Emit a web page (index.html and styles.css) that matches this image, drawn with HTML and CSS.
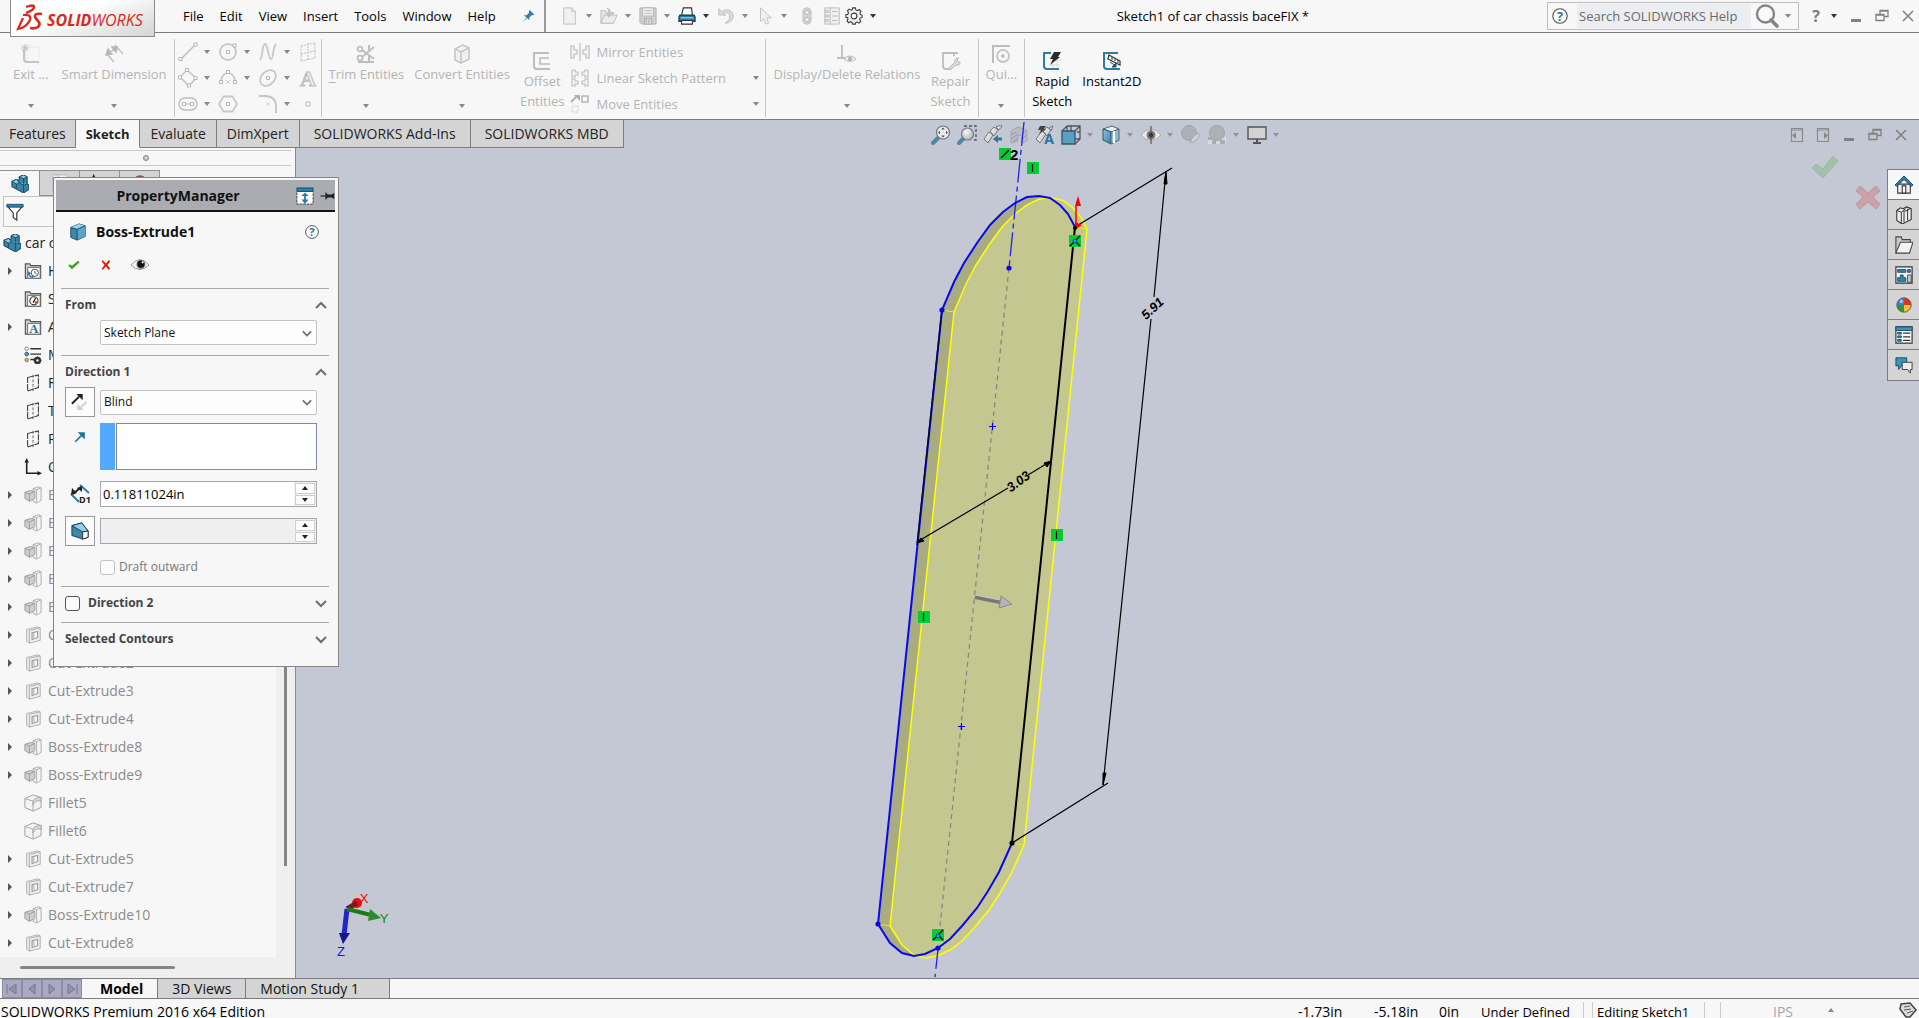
FILE: index.html
```html
<!DOCTYPE html>
<html lang="en">
<head>
<meta charset="utf-8">
<title>Sketch1 of car chassis baceFIX *</title>
<link rel="stylesheet" href="styles.css">
</head>
<body>
<svg class="paints" aria-hidden="true">
  <defs>
    <linearGradient id="blueg" x1="0" y1="0" x2="1" y2="1"><stop offset="0" stop-color="#8fc6de"/><stop offset="1" stop-color="#3b80a3"/></linearGradient>
    <linearGradient id="grayg" x1="0" y1="0" x2="1" y2="1"><stop offset="0" stop-color="#fff"/><stop offset="1" stop-color="#b5b5b5"/></linearGradient>
    <radialGradient id="lens" cx=".4" cy=".35" r=".7"><stop offset="0" stop-color="#f4f7f8"/><stop offset="1" stop-color="#a8b4bc"/></radialGradient>
  </defs>
</svg>
<svg class="sprite" aria-hidden="true">
  <symbol id="i-pin" viewBox="0 0 20 20"><path d="M12 1l7 7-2 1-2 0-3 3 0 4-3-3-7 6 6-7-4-3 4 0 3-3z" fill="#2f81ab"/></symbol>
  <symbol id="i-new" viewBox="0 0 20 20"><path d="M3 1h9l4 4v14H3z" fill="#f0f0f0" stroke="#bdbdbd"/><path d="M12 1v4h4" fill="none" stroke="#bdbdbd"/></symbol>
  <symbol id="i-open" viewBox="0 0 20 20"><path d="M1 4h5l1 2h8v12H1z" fill="#e2e2e2" stroke="#bdbdbd"/><path d="M1 18L5 9h14l-4 9z" fill="#ececec" stroke="#bdbdbd"/><path d="M7 1c4 0 5 2 5 6h3l-5 5-4-5h3c0-3 0-4-2-6z" fill="#c4c4c4"/></symbol>
  <symbol id="i-save" viewBox="0 0 20 20"><path d="M1 1h18v18H3l-2-2z" fill="#cfcfcf" stroke="#b0b0b0"/><path d="M4 1h12v9H4z" fill="#f2f2f2" stroke="#b0b0b0"/><path d="M6 4h8M6 7h8" stroke="#b0b0b0"/><path d="M6 13h8v6H6z" fill="#e0e0e0" stroke="#a8a8a8"/><path d="M8 14v4M11 14v4" stroke="#a0a0a0"/></symbol>
  <symbol id="i-print" viewBox="0 0 20 20"><path d="M4 9L6 1h9l1 8" fill="#fff" stroke="#333" stroke-width="1.3"/><path d="M2 9h16l1 2v5H1v-5z" fill="#2b7da4" stroke="#0c3c56" stroke-width="1.2"/><path d="M3 12h14" stroke="#8fd0ef" stroke-width="1.4"/><path d="M4 15h12v4H4z" fill="#fff" stroke="#333" stroke-width="1.2"/></symbol>
  <symbol id="i-undo" viewBox="0 0 20 20"><path d="M2 2v7h8L7 7c4-2 7 0 7 4 0 3-2 5-5 7 6 0 9-4 9-8 0-6-7-9-13-5z" fill="#dadada" stroke="#bdbdbd"/></symbol>
  <symbol id="i-select" viewBox="0 0 20 20"><path d="M5 1v15l4-3 2 6 3-1-2-6h5z" fill="#f1f1f1" stroke="#bdbdbd"/></symbol>
  <symbol id="i-light" viewBox="0 0 20 20"><rect x="5.500" y="1" width="9" height="18" rx="4.500" fill="#d5d5d5" stroke="#bbb"/><circle cx="10" cy="6" r="2.500" fill="#f4f4f4" stroke="#aaa"/><circle cx="10" cy="14" r="2.500" fill="#f4f4f4" stroke="#aaa"/></symbol>
  <symbol id="i-props" viewBox="0 0 20 20"><path d="M2 1h16v18H2zM8 1v18" fill="#f2f2f2" stroke="#b5b5b5"/><path d="M3 4h3v2H3zM3 9h3v2H3zM3 14h3v2H3zM10 5h6M10 10h6M10 15h6" fill="none" stroke="#b5b5b5"/></symbol>
  <symbol id="i-gear" viewBox="0 0 20 20"><path d="M8.500 1h3l.6 2.300 1.600.7 2.100-1.200 2 2-1.200 2.100.7 1.600L19 9v2.600l-2 .7-.7 1.600 1.200 2.100-2 2-2.100-1.200-1.600.7-.4 1.500h-3l-.6-2-1.600-.7-2.100 1.200-2-2 1.200-2.100L3 12 1 11.500v-3L3.200 8l.7-1.600L2.700 4.300l2-2 2.100 1.200L8.200 3z" fill="#eee" stroke="#3a3a3a" stroke-width="1.200"/><circle cx="10" cy="10" r="3.200" fill="#fff" stroke="#3a3a3a" stroke-width="1.200"/></symbol>
  <symbol id="i-help" viewBox="0 0 20 20"><circle cx="10" cy="10" r="8" fill="#fff" stroke="#4c4c4c" stroke-width="1.200"/><text x="10" y="15" class="glyph blue">?</text></symbol>
  <symbol id="i-find" viewBox="0 0 24 24"><circle cx="10.500" cy="10" r="8.500" fill="#fafafa" stroke="#858585" stroke-width="2.400"/><path d="M16 16l6 6" stroke="#858585" stroke-width="3.600" stroke-linecap="round"/></symbol>
  <symbol id="i-q" viewBox="0 0 12 16"><text x="6" y="14" class="glyph gray">?</text></symbol>
  <symbol id="i-min" viewBox="0 0 14 14"><path d="M2 10h10v3H2z" fill="#808080"/></symbol>
  <symbol id="i-restore" viewBox="0 0 14 14"><path d="M1 5.500h8v6H1zM5 5V1.500h8v6h-4M5 2h8M1 6h8" fill="none" stroke="#808080" stroke-width="1.300"/></symbol>
  <symbol id="i-close" viewBox="0 0 14 14"><path d="M2 2l10 10M12 2L2 12" stroke="#808080" stroke-width="1.500"/></symbol>
  <symbol id="i-paneL" viewBox="0 0 14 14"><path d="M1.500 .5h11v13h-11z" fill="none" stroke="#8a8a8a" stroke-width="1.200"/><path d="M1 2h12" stroke="#8a8a8a"/><path d="M2 7.500l4-3.500v7z" fill="#8a8a8a"/></symbol>
  <symbol id="i-paneR" viewBox="0 0 14 14"><path d="M1.500 .5h11v13h-11z" fill="none" stroke="#8a8a8a" stroke-width="1.200"/><path d="M1 2h12" stroke="#8a8a8a"/><path d="M12 7.500L8 4v7z" fill="#8a8a8a"/></symbol>

  <symbol id="r-exit" viewBox="0 0 20 20"><path d="M5 5v11q0 2 2 2h12M8 3h10v11" fill="none" stroke="#e6e6e6"/><path d="M3 6v9q0 3 3 3h12" fill="none" stroke="#c4c4c4" stroke-width="2"/><path d="M4 0v7M0 4h8M1 1l6 6M7 1L1 7" stroke="#bdbdbd"/></symbol>
  <symbol id="r-dim" viewBox="0 0 20 20"><path d="M3 10l7 8M11 1l8 9" stroke="#c4c4c4" stroke-width="1.600"/><path d="M4 10l9-7M2 11l2-6 4 5zM13 3l-5 0 4 5z" fill="#b8b8b8" stroke="#b8b8b8" stroke-width="1.500"/></symbol>
  <symbol id="r-line" viewBox="0 0 20 20"><path d="M3 17L17 3" stroke="#bfbfbf" stroke-width="1.600"/><path d="M1 15.500h3v3H1zM16 1h3v3h-3z" fill="#fff" stroke="#b5b5b5"/></symbol>
  <symbol id="r-circle" viewBox="0 0 20 20"><circle cx="10" cy="10" r="8" fill="none" stroke="#c9c9c9" stroke-width="1.800"/><path d="M8.500 8.500h3v3h-3zM15 2h3v3h-3z" fill="#fff" stroke="#b5b5b5"/></symbol>
  <symbol id="r-spline" viewBox="0 0 20 20"><path d="M2 18C5 15 4 2 7 2s3 15 6 15S14 6 18 2" fill="none" stroke="#c9c9c9" stroke-width="1.800"/></symbol>
  <symbol id="r-plane" viewBox="0 0 20 20"><path d="M3 4l14-3v15L3 19z M10 1v18M3 12l14-3" fill="none" stroke="#bdbdbd" stroke-dasharray="2 1"/></symbol>
  <symbol id="r-rect" viewBox="0 0 20 20"><path d="M2 9l7-7 9 8-7 8z" fill="none" stroke="#c4c4c4" stroke-width="1.600"/><path d="M.5 8h3v3h-3zM7.500.5h3v3h-3zM16 8.500h3v3h-3zM9.500 16h3v3h-3z" fill="#fff" stroke="#b5b5b5"/></symbol>
  <symbol id="r-arc" viewBox="0 0 20 20"><path d="M3 14C3 2 17 2 17 14" fill="none" stroke="#c4c4c4" stroke-width="1.600"/><path d="M1.500 12.500h3v3h-3zM15.500 12.500h3v3h-3zM8.500 2.500h3v3h-3z" fill="#fff" stroke="#b5b5b5"/><path d="M8 12l4 4M12 12l-4 4" stroke="#ccc"/></symbol>
  <symbol id="r-ellipse" viewBox="0 0 20 20"><ellipse cx="10" cy="10" rx="9" ry="6.500" transform="rotate(-45 10 10)" fill="none" stroke="#c4c4c4" stroke-width="1.600"/><path d="M8.500 8.500h3v3h-3z" fill="#fff" stroke="#b5b5b5"/></symbol>
  <symbol id="r-text" viewBox="0 0 20 20"><text x="10" y="18" class="glyph outline">A</text></symbol>
  <symbol id="r-slot" viewBox="0 0 20 20"><rect x="1" y="4" width="18" height="12" rx="6" fill="none" stroke="#c9c9c9" stroke-width="1.800"/><path d="M4.500 8.500h3v3h-3zM12.500 8.500h3v3h-3zM8 10h4" fill="#fff" stroke="#b5b5b5"/></symbol>
  <symbol id="r-poly" viewBox="0 0 20 20"><path d="M5.500 2.500h9L19 10l-4.500 7.500h-9L1 10z" fill="none" stroke="#c9c9c9" stroke-width="1.800"/><path d="M8.500 8.500h3v3h-3z" fill="#fff" stroke="#b5b5b5"/></symbol>
  <symbol id="r-fillet" viewBox="0 0 20 20"><path d="M1 2h6q11 0 11 11v6" fill="none" stroke="#c4c4c4" stroke-width="1.800"/><path d="M8 8l4 4M12 8l-4 4" stroke="#d5d5d5"/></symbol>
  <symbol id="r-point" viewBox="0 0 20 20"><path d="M8 8h4v4H8z" fill="#fff" stroke="#b5b5b5"/></symbol>
  <symbol id="r-trim" viewBox="0 0 20 20"><circle cx="4" cy="5" r="2.500" fill="none" stroke="#b9b9b9" stroke-width="1.700"/><circle cx="4" cy="14" r="2.500" fill="none" stroke="#b9b9b9" stroke-width="1.700"/><path d="M6 6l12 9M6 13L18 3M13 1v5M13 12v7M2 18h16" stroke="#bdbdbd" stroke-width="2"/></symbol>
  <symbol id="r-convert" viewBox="0 0 20 20"><path d="M3 5l8-4 6 3v11l-8 4-6-3z" fill="#f0f0f0" stroke="#bdbdbd" stroke-width="1.300"/><path d="M3 5l6 3 8-4M9 8v11" fill="none" stroke="#bdbdbd" stroke-width="1.300"/></symbol>
  <symbol id="r-offset" viewBox="0 0 20 20"><path d="M17 2H2v13q0 3 3 3h13" fill="none" stroke="#bdbdbd" stroke-width="2"/><path d="M17 7H8v6h10" fill="none" stroke="#bdbdbd" stroke-width="1.600"/></symbol>
  <symbol id="r-mirror" viewBox="0 0 20 20"><path d="M10 1v18M1 4h3v4h3v4H4v4H1zM19 4h-3v4h-3v4h3v4h3z" fill="none" stroke="#bdbdbd" stroke-width="1.200"/></symbol>
  <symbol id="r-linear" viewBox="0 0 20 20"><path d="M2 2h3v2h3v3H5v2H2zM18 2h-3v2h-3v3h3v2h3zM2 11h3v2h3v3H5v2H2zM18 11h-3v2h-3v3h3v2h3z" fill="none" stroke="#bdbdbd" stroke-width="1.200"/></symbol>
  <symbol id="r-move" viewBox="0 0 20 20"><path d="M1 8l6-6" stroke="#b0b0b0" stroke-width="2"/><path d="M4 1h6v6z" fill="#b0b0b0"/><path d="M12 2h6v6h-6z" fill="none" stroke="#b8b8b8" stroke-width="1.600"/><path d="M2 12h6v6H2z" fill="none" stroke="#d0d0d0" stroke-dasharray="2 1"/></symbol>
  <symbol id="r-disp" viewBox="0 0 20 20"><path d="M5 1v13M0 14h9" fill="none" stroke="#bdbdbd" stroke-width="1.800"/><path d="M7 15q6-6 12 0-6 5-12 0z" fill="#f2f2f2" stroke="#bdbdbd"/><circle cx="13" cy="15" r="2.200" fill="#b5b5b5"/></symbol>
  <symbol id="r-repair" viewBox="0 0 20 20"><path d="M17 2H2v13q0 3 3 3h3M13 2v3" fill="none" stroke="#bdbdbd" stroke-width="1.800"/><path d="M8 17l6-6q-1-4 4-4l-2 2 1 2h2q0 4-4 3l-6 5z" fill="#ddd" stroke="#b5b5b5"/></symbol>
  <symbol id="r-quick" viewBox="0 0 20 20"><path d="M2 19V2h17" fill="none" stroke="#bdbdbd" stroke-width="2"/><circle cx="12" cy="12" r="6" fill="none" stroke="#c4c4c4" stroke-width="1.800"/><circle cx="12" cy="12" r="1.800" fill="#b5b5b5"/></symbol>
  <symbol id="r-rapid" viewBox="0 0 20 20"><path d="M11 5v14M15 5v12M8 9h12M8 14h10" stroke="#dedede"/><path d="M9 2H2v13q0 3 3 3h12" fill="none" stroke="#2b7da4" stroke-width="2"/><path d="M12 1h7l-3 5h2L8 14l3-6H8z" fill="#2c2c2c"/></symbol>
  <symbol id="r-inst" viewBox="0 0 20 20"><path d="M16 2H2v13q0 3 3 3h13" fill="none" stroke="#2b7da4" stroke-width="2"/><path d="M7 4l11 6v4L6 8z" fill="#fff" stroke="#333" stroke-width="1.200"/><path d="M10 6v3M13 7v3M16 9v3" stroke="#333"/><path d="M8 11l6 4M14 12v4h-4z" fill="#1a5879" stroke="#1a5879"/></symbol>

  <symbol id="h-fit" viewBox="0 0 20 20"><path d="M2 18l6-6" stroke="#4c87a3" stroke-width="4" stroke-linecap="round"/><circle cx="12" cy="7.500" r="6.500" fill="#e9ecee" stroke="#6e747a" stroke-width="1.200"/><path d="M12 2.500l1.800 2h-3.600zM12 12.500l1.800-2h-3.600zM7 7.500l2-1.800v3.600zM17 7.500l-2-1.800v3.600z" fill="#4a4f54"/></symbol>
  <symbol id="h-area" viewBox="0 0 20 20"><path d="M7 1h12v14h-4" fill="none" stroke="#555" stroke-width="1.300" stroke-dasharray="3 2"/><path d="M2 18l4-4" stroke="#4c87a3" stroke-width="4" stroke-linecap="round"/><circle cx="10.500" cy="9" r="6" fill="url(#lens)" stroke="#737b82" stroke-width="1.200"/></symbol>
  <symbol id="h-prev" viewBox="0 0 20 20"><path d="M1 14l5-7 4 3-5 8zM7 6l4-4 4 3-4 6zM13 2l5-2 1 1-3 4z" fill="url(#grayg)" stroke="#777"/><path d="M10 14l5-4v2.500h4v3h-4V18z" fill="#33789a"/></symbol>
  <symbol id="h-sect" viewBox="0 0 20 20"><path d="M2 6l7-4 9 3v11l-5 2v-7l-4-1v6l-7 2z" fill="#b9bcc4" stroke="#a3a7ae"/><path d="M2 10l5-3M2 14l7-5M4 17l5-4M13 9l4-3M13 14l5-4" stroke="#9599a1"/></symbol>
  <symbol id="h-orient" viewBox="0 0 20 20"><path d="M1 14l6-8 4 3-6 9zM8 7l4-5 4 3-4 6zM14 3l4-2-2 5z" fill="url(#grayg)" stroke="#777"/><path d="M5 1h6l-2 3h2L4 9l2-4H3z" fill="#444"/><text x="14" y="19" class="glyph blue">A</text></symbol>
  <symbol id="h-cube" viewBox="0 0 20 20"><path d="M6 1h13v13l-5 5M6 1L1 6M19 1l-5 5M6 1v5M14 14h5M10 1v5M16 7h3" fill="none" stroke="#50555a" stroke-width="1.300"/><path d="M1 6h13v13H1z" fill="#5b9fc0" stroke="#28596f" stroke-width="1.300"/></symbol>
  <symbol id="h-style" viewBox="0 0 20 20"><path d="M2 4l9-3 7 3-7 3z" fill="#e6f0f4" stroke="#55656e"/><path d="M2 4l8 3v12l-8-4z" fill="url(#blueg)" stroke="#27576d"/><path d="M10 7l8-3v11l-8 4z" fill="#8cbcd2" stroke="#55656e"/><path d="M13 6v12" stroke="#fff" stroke-width="2"/></symbol>
  <symbol id="h-eye" viewBox="0 0 20 20"><path d="M0 10q10-12 20 0-10 11-20 0z" fill="#e9e9e9" stroke="#aaa"/><circle cx="10" cy="10" r="4.500" fill="#7b7b7b"/><circle cx="10" cy="10" r="2.200" fill="#333"/><path d="M10 1v18" stroke="#444"/></symbol>
  <symbol id="h-appear" viewBox="0 0 20 20"><circle cx="8" cy="8" r="7.500" fill="#acb0b7" stroke="#a0a4ab"/><path d="M9 18l2-5 6-5 2 3-6 6z" fill="#d0d2d6" stroke="#a5a8ae"/></symbol>
  <symbol id="h-scene" viewBox="0 0 20 20"><path d="M1 12h18v7H1z" fill="#d8dade"/><path d="M1 12h4v3H1zM9 12h4v3H9zM5 15h4v4H5zM13 15h5v4h-5z" fill="#a8acb3"/><circle cx="10" cy="8" r="7.500" fill="#acb0b7" stroke="#a0a4ab"/></symbol>
  <symbol id="h-view" viewBox="0 0 20 20"><path d="M1 2h18v12H1z" fill="#d2d2d2" stroke="#555" stroke-width="1.400"/><path d="M10 14v4M6 18h8" stroke="#555" stroke-width="2"/></symbol>

  <symbol id="t-part" viewBox="0 0 20 20"><path d="M1 7l5-2 3 1V2l5-2 4 2v8l2 1v5l-6 4L1 13z" fill="#3a82a6" stroke="#0f3c54"/><path d="M9 2l5-2 4 2-4 2zM1 7l5-2 3 3-3 2zM9 9l5 2 5-1" fill="#8fcbe4" stroke="#0f3c54" stroke-width=".8"/><path d="M14 4v7v8M6 10v5" fill="none" stroke="#0f3c54" stroke-width=".8"/></symbol>
  <symbol id="t-fold" viewBox="0 0 20 20"><path d="M1.500 18V2h5l1 2h11v14z" fill="#d0d0d0" stroke="#555" stroke-width="1.300"/><path d="M4 6h14v12H4z" fill="#f7f7f7" stroke="#666"/></symbol>
  <symbol id="t-hist" viewBox="0 0 20 20"><use href="#t-fold"/><circle cx="12" cy="12" r="4" fill="#fff" stroke="#444"/><path d="M12 10v2l2 1" fill="none" stroke="#444"/><path d="M5 13q2 5 6 3" fill="none" stroke="#2b7da4" stroke-width="1.800"/><path d="M4 14l1-4 3 3z" fill="#2b7da4"/></symbol>
  <symbol id="t-sens" viewBox="0 0 20 20"><use href="#t-fold"/><circle cx="11" cy="12" r="4.500" fill="#fff" stroke="#333" stroke-width="1.200"/><path d="M11 12l4 1-2 3z" fill="#e0421c"/><path d="M10 14l3-5" stroke="#333" stroke-width="1.400"/></symbol>
  <symbol id="t-anno" viewBox="0 0 20 20"><use href="#t-fold"/><text x="11" y="17" class="glyph serif">A</text></symbol>
  <symbol id="t-mat" viewBox="0 0 20 20"><path d="M7 3h12M7 9h12M7 15h6" stroke="#333" stroke-width="1.600"/><circle cx="3" cy="3" r="2" fill="#fff" stroke="#777"/><circle cx="3" cy="9" r="2" fill="#3fb0e0" stroke="#246"/><circle cx="3" cy="15.500" r="2" fill="#f2b01c" stroke="#875"/><circle cx="15" cy="16" r="2.800" fill="none" stroke="#333" stroke-width="2.400"/><path d="M15 11.500v9M10.500 16h9M12 13l6 6M18 13l-6 6" stroke="#333" stroke-width="1.200"/><circle cx="15" cy="16" r="1.300" fill="#f7f7f7"/></symbol>
  <symbol id="t-plane" viewBox="0 0 20 20"><path d="M4 4l12-3v14L4 19z" fill="none" stroke="#3c3c3c" stroke-width="1.200" stroke-dasharray="7 1"/><path d="M10 1v19" stroke="#555" stroke-dasharray="3 2"/></symbol>
  <symbol id="t-origin" viewBox="0 0 20 20"><path d="M3 3v14h14" fill="none" stroke="#222" stroke-width="1.800"/><path d="M3 0l2.500 5h-5zM20 17l-5-2.500v5z" fill="#222"/></symbol>
  <symbol id="t-boss" viewBox="0 0 20 20"><path d="M10 3l5-2 4 1v14l-5 3-4-2z" fill="#f4f4f4" stroke="#a9a9a9"/><path d="M14 4v14M10 3l4 1 5-2" fill="none" stroke="#a9a9a9"/><path d="M1 7l6-2 5 1v8l-6 3-5-3z" fill="#cfcfcf" stroke="#999"/><path d="M1 7l5 2 6-3M6 9v8" fill="none" stroke="#999"/></symbol>
  <symbol id="t-cut" viewBox="0 0 20 20"><path d="M3 4l12-3 3 1v14L6 19l-3-2z" fill="#eee" stroke="#aaa"/><path d="M6 5l12-3M6 5v14" stroke="#aaa"/><path d="M9 7.500l6-1.500v7l-6 2z" fill="#fff" stroke="#999" stroke-width="1.300"/><path d="M11 7v6.500" stroke="#999"/></symbol>
  <symbol id="t-fillet" viewBox="0 0 20 20"><path d="M1 5l9-4 9 3v11l-9 4-9-4z" fill="#f3f3f3" stroke="#999"/><path d="M1 5l9 3v11" fill="none" stroke="#a5a5a5"/><path d="M10 8q1-4 9-4v4q-6-2-9 4z" fill="#d8d8d8" stroke="#a5a5a5"/></symbol>
  <symbol id="t-filter" viewBox="0 0 20 20"><path d="M2 4h16l-6 7v8l-4-3v-5z" fill="#fff" stroke="#333" stroke-width="1.300"/><path d="M1 1.500h18v3H1z" fill="#2f86ae" stroke="#124a66"/></symbol>

  <symbol id="d-cube" viewBox="0 0 20 20"><path d="M2 5l9-4 7 2v12l-9 4-7-3z" fill="#3d87ab" stroke="#174a63"/><path d="M2 5l9-4 7 2-9 4z" fill="#9ed3e8"/><path d="M9 7l9-4v12l-9 4z" fill="#5ba4c6"/><path d="M2 5l7 2 9-4M9 7v12" fill="none" stroke="#174a63"/></symbol>
  <symbol id="d-dock" viewBox="0 0 20 20"><path d="M1 5h18v14H1z" fill="#fff" stroke="#333" stroke-dasharray="3 1"/><path d="M1 1h18v4H1z" fill="#2b7da4" stroke="#14506e"/><path d="M10 6l4 4h-3v4h3l-4 5-4-5h3v-4H6z" fill="#2b7da4"/></symbol>
  <symbol id="d-tack" viewBox="0 0 20 20"><path d="M2 10h7" stroke="#222" stroke-width="1.500"/><path d="M8 5v10l3-3h5l3 2V6l-3 2h-5z" fill="#222"/></symbol>
  <symbol id="d-ok" viewBox="0 0 20 20"><path d="M4 9l-2 2 5 5L18 6l-2-2-9 7z" fill="#3fa317"/></symbol>
  <symbol id="d-no" viewBox="0 0 20 20"><path d="M5 3l5 5 4-5 2 2-4 5 4 5-2 2-4-5-5 5-1-2 4-5-4-5z" fill="#e02200"/></symbol>
  <symbol id="d-eye" viewBox="0 0 20 20"><path d="M0 10q10-12 20 0-10 10-20 0z" fill="#f6f6f6" stroke="#8f8f8f"/><circle cx="11" cy="9.500" r="5" fill="#8a8a8a"/><circle cx="11" cy="9" r="4" fill="#111"/><circle cx="13" cy="7" r="1.200" fill="#fff"/></symbol>
  <symbol id="d-rev" viewBox="0 0 20 20"><path d="M1 12l8-8" stroke="#222" stroke-width="2.200"/><path d="M6 1h7v7z" fill="#222"/><path d="M17 10l-6 6" stroke="#cfcfcf" stroke-width="2.200"/><path d="M7 12v7h7z" fill="#cfcfcf"/></symbol>
  <symbol id="d-dir" viewBox="0 0 20 20"><path d="M4 16l8-8" stroke="#1f7199" stroke-width="2"/><path d="M7 4h9v9z" fill="#1f7199"/></symbol>
  <symbol id="d-d1" viewBox="0 0 20 20"><path d="M1 10l8 8M10 1l9 8" stroke="#2b7da4" stroke-width="2"/><path d="M3 10l7-6" stroke="#222" stroke-width="2"/><path d="M1 11l1-7 5 5zM12 2v6L7 4z" fill="#222"/><text x="15" y="19" class="glyph tiny">D1</text></symbol>
  <symbol id="d-draft" viewBox="0 0 20 20"><path d="M1 4l11-3 7 9v7l-6 2L1 15z" fill="#3d87ab" stroke="#12394c"/><path d="M1 4l11-3 7 9-6 1z" fill="#8fd0ea" stroke="#12394c"/><path d="M13 11l6-1v7l-6 2z" fill="#fff" stroke="#222"/></symbol>
  <symbol id="d-up" viewBox="0 0 12 12"><path d="M1 9l5-5 5 5" fill="none" stroke="#6e6e6e" stroke-width="2"/></symbol>
  <symbol id="d-down" viewBox="0 0 12 12"><path d="M1 4l5 5 5-5" fill="none" stroke="#6e6e6e" stroke-width="2"/></symbol>

  <symbol id="p-home" viewBox="0 0 20 20"><path d="M3 9h14v10H3z" fill="#f4f4f4" stroke="#333" stroke-width="1.200"/><path d="M8 11h4v8H8z" fill="#fff" stroke="#333" stroke-width="1.200"/><path d="M0 10L10 0l10 10-2 1.500L10 4 2 11.500z" fill="#2f81a8" stroke="#0e3d55"/></symbol>
  <symbol id="p-lib" viewBox="0 0 20 20"><path d="M2 5l4-3 3 1 4-2 5 2v12l-10 5-6-4z" fill="#efefef" stroke="#333" stroke-width="1.200"/><path d="M2 5l5 2 5-4M7 7v12M10 4v14M14 3v13M11 6l6-3" fill="none" stroke="#333" stroke-width="1.100"/></symbol>
  <symbol id="p-folder" viewBox="0 0 20 20"><path d="M1 19V1h6l1 3h9v3" fill="#c9c9c9" stroke="#444" stroke-width="1.200"/><path d="M1 19L6 7h14l-4 12z" fill="#f3f3f3" stroke="#444" stroke-width="1.200"/></symbol>
  <symbol id="p-pal" viewBox="0 0 20 20"><path d="M1 1h18v18H1z" fill="#f2f2f2" stroke="#333" stroke-width="1.300"/><path d="M3 4h9v3H3zM14 4h3v3h-3zM6 10h3v3h3v4H3v-4h3z" fill="#2f86ae" stroke="#164a63"/><path d="M14 10h4v8h-4z" fill="#ccc" stroke="#444"/></symbol>
  <symbol id="p-ball" viewBox="0 0 20 20"><path d="M10 10V2a8 8 0 0 0-8 8z" fill="#3a7de0"/><path d="M10 10V2a8 8 0 0 1 8 8z" fill="#e03024"/><path d="M10 10h8a8 8 0 0 1-8 8z" fill="#f0c030"/><path d="M10 10v8a8 8 0 0 1-8-8z" fill="#2a9a2a"/><circle cx="10" cy="10" r="8" fill="none" stroke="#555"/><circle cx="7" cy="6" r="2" fill="#fff" opacity=".5"/></symbol>
  <symbol id="p-list" viewBox="0 0 20 20"><path d="M1 1h18v18H1z" fill="#fff" stroke="#333" stroke-width="1.300"/><path d="M1 1h18v4H1z" fill="#3b93bb" stroke="#164a63"/><path d="M3 7h4v2H3zM3 11h4v2H3zM3 15h4v2H3z" fill="#3b93bb" stroke="#164a63"/><path d="M9 8h8M9 12h8M9 16h8" stroke="#333" stroke-width="1.300"/></symbol>
  <symbol id="p-chat" viewBox="0 0 20 20"><path d="M1 2h12v9H7l-3 4v-4H1z" fill="#3b93bb" stroke="#164a63"/><path d="M8 7h11v8h-2v4l-3-4H8z" fill="#ececec" stroke="#333"/></symbol>
</svg>

<header class="titlebar">
  <div class="logo">
    <svg width="28" height="32" viewBox="0 0 28 32"><path d="M11 5q8-3 8 0t-8 6" fill="none" stroke="#da291c" stroke-width="2.400"/><path d="M8 13q9-1 7 5-3 7-12 9l5-11" fill="none" stroke="#da291c" stroke-width="2.200"/><path d="M27 12q-7-1-7 2 0 2 3 5t0 6q-3 2-8 1" fill="none" stroke="#da291c" stroke-width="2.600"/></svg>
    <span><b>SOLID</b>WORKS</span>
  </div>
  <nav class="menu">
    <button>File</button><button>Edit</button><button>View</button><button>Insert</button><button>Tools</button><button>Window</button><button>Help</button>
  </nav>
  <button class="pin" aria-label="Pin menu"><svg class="i14"><use href="#i-pin"/></svg></button>
  <div class="quick">
    <button class="split" aria-label="New"><svg class="i18"><use href="#i-new"/></svg><i class="caret"></i></button>
    <button class="split" aria-label="Open"><svg class="i18"><use href="#i-open"/></svg><i class="caret"></i></button>
    <button class="split" aria-label="Save"><svg class="i18"><use href="#i-save"/></svg><i class="caret"></i></button>
    <button class="split" aria-label="Print"><svg class="i18"><use href="#i-print"/></svg><i class="caret dark"></i></button>
    <button class="split" aria-label="Undo"><svg class="i18"><use href="#i-undo"/></svg><i class="caret"></i></button>
    <button class="split" aria-label="Select"><svg class="i18"><use href="#i-select"/></svg><i class="caret"></i></button>
    <button class="single" aria-label="Rebuild"><svg class="i18"><use href="#i-light"/></svg></button>
    <button class="single" aria-label="File properties"><svg class="i18"><use href="#i-props"/></svg></button>
    <button class="split" aria-label="Options"><svg class="i18"><use href="#i-gear"/></svg><i class="caret dark"></i></button>
  </div>
  <div class="doc">Sketch1 of car chassis baceFIX *</div>
  <div class="search">
    <svg class="i18"><use href="#i-help"/></svg>
    <input type="text" placeholder="Search SOLIDWORKS Help" aria-label="Search SOLIDWORKS Help">
    <button aria-label="Search"><svg class="i24"><use href="#i-find"/></svg><i class="caret"></i></button>
  </div>
  <div class="winctl">
    <button class="helpq" aria-label="Help"><svg width="12" height="16"><use href="#i-q"/></svg><i class="caret dark"></i></button>
    <button aria-label="Minimize"><svg class="i14"><use href="#i-min"/></svg></button>
    <button aria-label="Restore"><svg class="i14"><use href="#i-restore"/></svg></button>
    <button aria-label="Close"><svg class="i14"><use href="#i-close"/></svg></button>
  </div>
</header>

<section class="ribbon">
  <button class="cmd exit" disabled><svg class="i20"><use href="#r-exit"/></svg><span>Exit ...</span><i class="caret"></i></button>
  <button class="cmd" disabled><svg class="i20"><use href="#r-dim"/></svg><span>Smart Dimension</span><i class="caret"></i></button>
  <div class="sep"></div>
  <div class="tools">
    <button disabled aria-label="Line"><svg class="i20"><use href="#r-line"/></svg><i class="caret"></i></button>
    <button disabled aria-label="Circle"><svg class="i20"><use href="#r-circle"/></svg><i class="caret"></i></button>
    <button disabled aria-label="Spline"><svg class="i20"><use href="#r-spline"/></svg><i class="caret"></i></button>
    <button disabled aria-label="Plane"><svg class="i20"><use href="#r-plane"/></svg></button>
    <button disabled aria-label="Rectangle"><svg class="i20"><use href="#r-rect"/></svg><i class="caret"></i></button>
    <button disabled aria-label="Arc"><svg class="i20"><use href="#r-arc"/></svg><i class="caret"></i></button>
    <button disabled aria-label="Ellipse"><svg class="i20"><use href="#r-ellipse"/></svg><i class="caret"></i></button>
    <button disabled aria-label="Text"><svg class="i20"><use href="#r-text"/></svg></button>
    <button disabled aria-label="Slot"><svg class="i20"><use href="#r-slot"/></svg><i class="caret"></i></button>
    <button disabled aria-label="Polygon"><svg class="i20"><use href="#r-poly"/></svg></button>
    <button disabled aria-label="Sketch fillet"><svg class="i20"><use href="#r-fillet"/></svg><i class="caret"></i></button>
    <button disabled aria-label="Point"><svg class="i20"><use href="#r-point"/></svg></button>
  </div>
  <div class="sep"></div>
  <button class="cmd" disabled><svg class="i20"><use href="#r-trim"/></svg><span><u>T</u>rim Entities</span><i class="caret"></i></button>
  <button class="cmd" disabled><svg class="i20"><use href="#r-convert"/></svg><span>Convert Entities</span><i class="caret"></i></button>
  <button class="cmd low" disabled><svg class="i20"><use href="#r-offset"/></svg><span>Offset<br>Entities</span></button>
  <div class="list">
    <button disabled><svg class="i20"><use href="#r-mirror"/></svg><span>Mirror Entities</span></button>
    <button disabled><svg class="i20"><use href="#r-linear"/></svg><span>Linear Sketch Pattern</span><i class="caret"></i></button>
    <button disabled><svg class="i20"><use href="#r-move"/></svg><span>Move Entities</span><i class="caret"></i></button>
  </div>
  <div class="sep"></div>
  <button class="cmd" disabled><svg class="i20"><use href="#r-disp"/></svg><span>Display/Delete Relations</span><i class="caret"></i></button>
  <button class="cmd low" disabled><svg class="i20"><use href="#r-repair"/></svg><span>Repair<br>Sketch</span></button>
  <div class="sep"></div>
  <button class="cmd" disabled><svg class="i20"><use href="#r-quick"/></svg><span>Qui...</span><i class="caret"></i></button>
  <div class="sep"></div>
  <button class="cmd low"><svg class="i20"><use href="#r-rapid"/></svg><span>Rapid<br>Sketch</span></button>
  <button class="cmd low"><svg class="i20"><use href="#r-inst"/></svg><span>Instant2D</span></button>
</section>

<main class="work">
  <div class="toprow">
    <nav class="tabs">
      <button>Features</button><button class="on">Sketch</button><button>Evaluate</button><button>DimXpert</button><button>SOLIDWORKS Add-Ins</button><button>SOLIDWORKS MBD</button>
    </nav>
    <div class="hud">
      <button aria-label="Zoom to fit"><svg class="i20"><use href="#h-fit"/></svg></button>
      <button aria-label="Zoom to area"><svg class="i20"><use href="#h-area"/></svg></button>
      <button aria-label="Previous view"><svg class="i20"><use href="#h-prev"/></svg></button>
      <button aria-label="Section view"><svg class="i20"><use href="#h-sect"/></svg></button>
      <button aria-label="Dynamic annotation views"><svg class="i20"><use href="#h-orient"/></svg></button>
      <button class="wide" aria-label="View orientation"><svg class="i20"><use href="#h-cube"/></svg><i class="caret"></i></button>
      <button class="wide" aria-label="Display style"><svg class="i20"><use href="#h-style"/></svg><i class="caret"></i></button>
      <button class="wide" aria-label="Hide or show items"><svg class="i20"><use href="#h-eye"/></svg><i class="caret"></i></button>
      <button aria-label="Edit appearance"><svg class="i20"><use href="#h-appear"/></svg></button>
      <button class="wide" aria-label="Apply scene"><svg class="i20"><use href="#h-scene"/></svg><i class="caret"></i></button>
      <button class="wide" aria-label="View settings"><svg class="i20"><use href="#h-view"/></svg><i class="caret"></i></button>
    </div>
    <div class="docctl">
      <button aria-label="Expand left"><svg class="i14"><use href="#i-paneL"/></svg></button>
      <button aria-label="Expand right"><svg class="i14"><use href="#i-paneR"/></svg></button>
      <button aria-label="Minimize document"><svg class="i14"><use href="#i-min"/></svg></button>
      <button aria-label="Restore document"><svg class="i14"><use href="#i-restore"/></svg></button>
      <button aria-label="Close document"><svg class="i14"><use href="#i-close"/></svg></button>
    </div>
  </div>

  <div class="body">
    <aside class="side">
      <div class="grip"><i></i></div>
      <div class="ptabs">
        <button class="on" aria-label="Feature tree"><svg class="i18"><use href="#t-part"/></svg></button>
        <button aria-label="Properties"><svg class="i18"><use href="#i-props"/></svg></button>
        <button aria-label="Configurations"><svg class="i18"><use href="#t-origin"/></svg></button>
        <button aria-label="Display manager"><svg class="i18"><use href="#p-ball"/></svg></button>
      </div>
      <div class="treewrap">
        <div class="treebox">
          <div class="filter"><svg class="i18"><use href="#t-filter"/></svg></div>
          <ul class="tree">
            <li class="root"><svg class="i18"><use href="#t-part"/></svg>car chassis baceFIX</li>
            <li class="x"><svg class="i18"><use href="#t-hist"/></svg>History</li>
            <li><svg class="i18"><use href="#t-sens"/></svg>Sensors</li>
            <li class="x"><svg class="i18"><use href="#t-anno"/></svg>Annotations</li>
            <li><svg class="i18"><use href="#t-mat"/></svg>Material</li>
            <li><svg class="i18"><use href="#t-plane"/></svg>Front Plane</li>
            <li><svg class="i18"><use href="#t-plane"/></svg>Top Plane</li>
            <li><svg class="i18"><use href="#t-plane"/></svg>Right Plane</li>
            <li><svg class="i18"><use href="#t-origin"/></svg>Origin</li>
            <li class="x off"><svg class="i18"><use href="#t-boss"/></svg>Boss-Extrude1</li>
            <li class="x off"><svg class="i18"><use href="#t-boss"/></svg>Boss-Extrude2</li>
            <li class="x off"><svg class="i18"><use href="#t-boss"/></svg>Boss-Extrude3</li>
            <li class="x off"><svg class="i18"><use href="#t-boss"/></svg>Boss-Extrude4</li>
            <li class="x off"><svg class="i18"><use href="#t-boss"/></svg>Boss-Extrude5</li>
            <li class="x off"><svg class="i18"><use href="#t-cut"/></svg>Cut-Extrude1</li>
            <li class="x off"><svg class="i18"><use href="#t-cut"/></svg>Cut-Extrude2</li>
            <li class="x off"><svg class="i18"><use href="#t-cut"/></svg>Cut-Extrude3</li>
            <li class="x off"><svg class="i18"><use href="#t-cut"/></svg>Cut-Extrude4</li>
            <li class="x off"><svg class="i18"><use href="#t-boss"/></svg>Boss-Extrude8</li>
            <li class="x off"><svg class="i18"><use href="#t-boss"/></svg>Boss-Extrude9</li>
            <li class="off"><svg class="i18"><use href="#t-fillet"/></svg>Fillet5</li>
            <li class="off"><svg class="i18"><use href="#t-fillet"/></svg>Fillet6</li>
            <li class="x off"><svg class="i18"><use href="#t-cut"/></svg>Cut-Extrude5</li>
            <li class="x off"><svg class="i18"><use href="#t-cut"/></svg>Cut-Extrude7</li>
            <li class="x off"><svg class="i18"><use href="#t-boss"/></svg>Boss-Extrude10</li>
            <li class="x off"><svg class="i18"><use href="#t-cut"/></svg>Cut-Extrude8</li>
          </ul>
        </div>
        <div class="vscroll"><i></i></div>
      </div>
      <div class="hscroll"><i></i></div>
    </aside>

    <section class="view">
      <svg class="model" viewBox="296 148 1623 830">
        <path d="M942 310L954 282 964 263 977 243 990 225 1003 212 1015 203 1027 197 1039 196 1050 198 1060 205 1068 214 1075 227 1012 843 999 872 988 891 977 908 962 926 950 939 938 948 925 954 914 956 902 953 890 943 878 924Z" fill="#a9ab81"/>
        <path d="M954 312L966 284 976 265 989 245 1002 227 1015 214 1027 205 1039 199 1051 198 1062 200 1072 207 1080 216 1087 229 1024 845 1011 874 1000 893 989 910 974 928 962 941 950 950 937 956 926 958 914 955 902 945 890 926Z" fill="#c4c790" stroke="#ff0" stroke-width="1.500"/>
        <path d="M942 310l12 2M1075 227l12 2M1012 843l12 2M878 924l12 2" stroke="#f4f000"/>
        <path d="M1009 268L940 926" stroke="#848484" stroke-dasharray="5 4" stroke-width="1.200"/>
        <path d="M1024 122L1009 268" stroke="#2222f0" stroke-width="1.300" stroke-dasharray="24 4 5 4"/>
        <path d="M938 949L935 977" stroke="#2222f0" stroke-width="1.300" stroke-dasharray="20 5"/>
        <path d="M1075 227L1068 214 1060 205 1050 198 1039 196 1027 197 1015 203 1003 212 990 225 977 243 964 263 954 282 942 310L878 924 890 943 902 953 914 956 925 954 938 948 950 939 962 926 977 908 988 891 999 872 1012 843" fill="none" stroke="#0808f0" stroke-width="2"/>
        <path d="M942 310L917 545" stroke="#080840" stroke-width="1.500"/>
        <path d="M1075 227L1012 843" stroke="#000" stroke-width="2"/>
        <path d="M1075 227L1172 168M1012 843L1108 783M1166 171L1154 297M1151 319L1103 785M917 542L1008 488M1028 475L1051 461" stroke="#000" stroke-width="1.200"/>
        <path d="M1166 171l-2 13 3 0zM1103 785l0-12 3 0zM917 543l4-5 3 3zM1051 461l-7 2 3 4z" stroke="#000"/>
        <text class="dim" transform="translate(1152 308) rotate(-42)" y="5">5.91</text>
        <text class="dim" transform="translate(1018 481) rotate(-36)" y="5">3.03</text>
        <g fill="#0808f0"><circle cx="942" cy="310" r="2.600"/><circle cx="1009" cy="268" r="2.600"/><circle cx="878" cy="924" r="2.600"/><circle cx="938" cy="948" r="2.600"/></g>
        <circle cx="1012" cy="843" r="2.600"/>
        <path d="M989 426.500h7M992.500 423v7M958 726.500h7M961.500 723v7" stroke="#00f" stroke-width="1.200"/>
        <path d="M1076 227V206" stroke="red" stroke-width="1.500"/><path d="M1078 196l3 10h-6zM1075 230l0-8 7 3z" fill="red"/><circle cx="1075" cy="228" r="2"/>
        <g fill="#0c3"><path d="M999 148h12v12h-12zM1027 162h12v12h-12zM1069 235h12v12h-12zM1051 529h12v12h-12zM918 611h12v12h-12zM932 929h12v12h-12z"/></g>
        <path d="M1001 158L1009 150M1032.500 164v8M1056.500 531v8M923.500 613v8M1070 246l10-10M1075 241l5 5M933 940l10-10M938 935l5 5" stroke="#000" stroke-width="1.200"/>
        <g fill="#3f8fff" stroke="#1440a0"><circle cx="1075" cy="241" r="2"/><circle cx="938" cy="936" r="2"/></g>
        <text class="count" x="1010" y="160">2</text>
        <path d="M975 597L1000 602" stroke="#777" stroke-width="4"/><path d="M975 595L1000 600" stroke="#cfcfcf"/><path d="M1001 596l11 8-13 4z" fill="#b4b4b4" stroke="#8a8a8a"/>
      </svg>
      <svg class="triad" viewBox="330 888 64 72">
        <circle cx="357" cy="903" r="5" fill="#e01414"/><path d="M347 909l10-6" stroke="#7a1a1a" stroke-width="5"/>
        <path d="M347 909l-3 26" stroke="#2424c8" stroke-width="5"/><path d="M339 933h11l-7 11z" fill="#14148c"/>
        <path d="M347 909l24 6" stroke="#1c7c1c" stroke-width="4"/><path d="M370 909l11 9-13 3z" fill="#2a8c2a"/>
        <text x="364" y="903" class="axis" fill="red">X</text><text x="384" y="923" class="axis" fill="#0a8a0a">Y</text><text x="341" y="956" class="axis" fill="#11f">Z</text>
      </svg>
      <div class="confirm">
        <svg width="28" height="24" viewBox="0 0 28 24"><path d="M5 9l-4 4 11 10L27 6l-5-5-10 13z" fill="#a3c0a8" stroke="#9ab8a0"/></svg>
        <svg width="26" height="26" viewBox="0 0 26 26"><path d="M5 2l8 7 8-7 4 5-7 6 7 7-4 5-8-7-8 7-4-5 7-7-7-6z" fill="#caa2aa" stroke="#c093a0"/></svg>
      </div>
      <nav class="taskpane">
        <button class="on" aria-label="Resources"><svg class="i18"><use href="#p-home"/></svg></button>
        <button aria-label="Design library"><svg class="i18"><use href="#p-lib"/></svg></button>
        <button aria-label="File explorer"><svg class="i18"><use href="#p-folder"/></svg></button>
        <button aria-label="View palette"><svg class="i18"><use href="#p-pal"/></svg></button>
        <button aria-label="Appearances"><svg class="i18"><use href="#p-ball"/></svg></button>
        <button aria-label="Custom properties"><svg class="i18"><use href="#p-list"/></svg></button>
        <button aria-label="Forum"><svg class="i18"><use href="#p-chat"/></svg></button>
      </nav>
    </section>

    <form class="pm">
      <div class="pmhead"><h2>PropertyManager</h2><svg class="i18"><use href="#d-dock"/></svg><svg class="i16"><use href="#d-tack"/></svg></div>
      <div class="pmtitle"><svg class="i18"><use href="#d-cube"/></svg><h3>Boss-Extrude1</h3><svg class="i16"><use href="#i-help"/></svg></div>
      <div class="pmact">
        <button type="button" aria-label="OK"><svg class="i14"><use href="#d-ok"/></svg></button>
        <button type="button" aria-label="Cancel"><svg class="i14"><use href="#d-no"/></svg></button>
        <button type="button" aria-label="Preview"><svg class="i18"><use href="#d-eye"/></svg></button>
      </div>
      <section class="grp">
        <h4>From<svg class="i12"><use href="#d-up"/></svg></h4>
        <div class="row"><span></span><div class="sel"><select aria-label="From"><option>Sketch Plane</option></select><svg class="i12"><use href="#d-down"/></svg></div></div>
      </section>
      <section class="grp dir">
        <h4>Direction 1<svg class="i12"><use href="#d-up"/></svg></h4>
        <div class="row"><button class="box" type="button" aria-label="Reverse direction"><svg class="i18"><use href="#d-rev"/></svg></button><div class="sel"><select aria-label="End condition"><option>Blind</option></select><svg class="i12"><use href="#d-down"/></svg></div></div>
        <div class="row pick"><svg class="i16"><use href="#d-dir"/></svg><div class="picker"><i></i><textarea aria-label="Direction of extrusion"></textarea></div></div>
        <div class="row"><svg class="i20"><use href="#d-d1"/></svg><div class="spin"><input type="text" value="0.11811024in" aria-label="Depth"><div><button type="button" aria-label="Increase depth"><i class="caret up"></i></button><button type="button" aria-label="Decrease depth"><i class="caret"></i></button></div></div></div>
        <div class="row"><button class="box" type="button" aria-label="Draft"><svg class="i18"><use href="#d-draft"/></svg></button><div class="spin off"><input type="text" disabled aria-label="Draft angle"><div><button type="button" aria-label="Increase angle"><i class="caret up"></i></button><button type="button" aria-label="Decrease angle"><i class="caret"></i></button></div></div></div>
        <div class="row chk"><span></span><label><input type="checkbox" disabled>Draft outward</label></div>
      </section>
      <section class="grp fold"><h4><label><input type="checkbox">Direction 2</label><svg class="i12"><use href="#d-down"/></svg></h4></section>
      <section class="grp fold"><h4>Selected Contours<svg class="i12"><use href="#d-down"/></svg></h4></section>
    </form>
  </div>
</main>

<nav class="sheets">
  <button class="nav" aria-label="First"><svg width="14" height="14"><path d="M2 2v10M11 2v10L4 7z" fill="#9393ae" stroke="#77778f"/></svg></button>
  <button class="nav" aria-label="Previous"><svg width="14" height="14"><path d="M10 2v10L4 7z" fill="#9393ae" stroke="#77778f"/></svg></button>
  <button class="nav" aria-label="Next"><svg width="14" height="14"><path d="M4 2v10l6-5z" fill="#9393ae" stroke="#77778f"/></svg></button>
  <button class="nav" aria-label="Last"><svg width="14" height="14"><path d="M12 2v10M3 2v10l7-5z" fill="#9393ae" stroke="#77778f"/></svg></button>
  <button class="sheet on">Model</button><button class="sheet">3D Views</button><button class="sheet wide">Motion Study 1</button>
</nav>
<footer class="status">
  <span class="app">SOLIDWORKS Premium 2016 x64 Edition</span>
  <span class="c1">-1.73in</span><span class="c2">-5.18in</span><span class="c3">0in</span><span class="c4">Under Defined</span>
  <span class="c5">Editing Sketch1</span><span class="c6">IPS</span><i class="caret up gray"></i>
  <svg class="tag" width="18" height="16" viewBox="0 0 18 16"><path d="M2 2l9-1 6 7-6 7H7L1 7z" fill="#ddd" stroke="#444" stroke-width="1.500"/><path d="M5 5l6-1M5 8l7-1M8 11l6-2" stroke="#555"/></svg>
</footer>
</body>
</html>
```
FILE: styles.css
```css
* { box-sizing: border-box; }
html, body { height: 100%; }
body {
  margin: 0;
  display: flex;
  flex-direction: column;
  overflow: hidden;
  background: #f7f7f7;
  color: #111;
  font: 13px/20px "Open Sans", "Noto Sans", sans-serif;
}
button {
  margin: 0; padding: 0; border: 0;
  background: none; color: inherit; font: inherit;
  display: flex; align-items: center; justify-content: center;
}
h2, h3, h4, ul { margin: 0; padding: 0; font-size: inherit; }
svg { display: block; flex: none; }
.paints { position: absolute; width: 0; height: 0; }
.sprite { display: none; }
.i12 { width: 12px; height: 12px; }
.i14 { width: 14px; height: 14px; }
.i16 { width: 16px; height: 16px; }
.i18 { width: 18px; height: 18px; }
.i20 { width: 20px; height: 20px; }
.i24 { width: 24px; height: 24px; }
.caret {
  flex: none; width: 0; height: 0;
  border: 3px solid transparent; border-top: 4px solid #888; border-bottom: 0;
}
.caret.dark { border-top-color: #333; }
.caret.up { border-top: 0; border-bottom: 4px solid #222; }
.caret.gray { border-bottom-color: #888; }

/* letters inside icons */
.glyph { font: bold 14px "Open Sans", sans-serif; text-anchor: middle; }
.glyph.blue { fill: #2576a0; }
.glyph.gray { fill: #7d7d7d; font-size: 16px; }
.glyph.serif { fill: #236f96; font: bold 14px "Liberation Serif", serif; }
.glyph.outline { fill: #ececec; stroke: #bdbdbd; font: bold 22px "Liberation Serif", serif; }
.glyph.tiny { fill: #222; font-size: 9px; }

/* title bar */
.titlebar {
  flex: none; height: 33px; display: flex; align-items: center;
  border-bottom: 1px solid #7d7d7d; padding-left: 10px; position: relative; z-index: 2;
}
.logo {
  align-self: flex-start; width: 145px; height: 37px; padding: 0 4px; flex: none;
  display: flex; align-items: center; gap: 4px;
  border: 1px solid #8a8a8a; border-top: 0;
  background: linear-gradient(160deg, #fff 40%, #d4d4d4);
  color: #da291c; font-size: 16px; font-style: italic;
}
.logo span { padding-top: 4px; }
.menu { display: flex; gap: 16px; margin-left: 28px; flex: none; color: #000; }
.pin { margin-left: 25px; margin-right: 9px; }
.quick { display: flex; align-items: center; height: 32px; border-left: 2px solid #999; padding-left: 15px; flex: none; }
.split { width: 39px; justify-content: flex-start; gap: 7px; }
.single { width: 25px; }
.quick .single + .split { width: 34px; }
.doc { flex: 1; text-align: center; color: #000; white-space: nowrap; }
.search { flex: none; width: 252px; height: 28px; border: 1px solid #bdbdbd; display: flex; align-items: center; padding: 0 3px; }
.search input {
  flex: 1; min-width: 0; height: 24px; margin-left: 8px; border: 0; padding: 0 2px;
  background: #ecedf1; font: 13px/20px "Open Sans", sans-serif;
}
.search input::placeholder { color: #6a6a6a; opacity: 1; }
.search button { gap: 6px; width: 44px; }
.winctl { display: flex; align-items: center; flex: none; padding: 0 4px 0 11px; gap: 12px; }
.helpq { gap: 9px; }

/* ribbon */
.ribbon { flex: none; height: 87px; display: flex; padding: 6px 0 2px 8px; border-bottom: 1px solid #7d7d7d; color: #000; }
.ribbon button:disabled { color: #b4b4b4; }
.cmd { flex-direction: column; justify-content: flex-start; padding: 5px 5px 9px; white-space: nowrap; }
.cmd.exit { padding-right: 8px; }
.cmd .caret { margin-top: auto; }
.cmd.low { padding-top: 12px; }
.cmd u { text-underline-offset: 3px; }
.sep { width: 1px; margin: 0 2px; background: #c6c6c6; }
.tools { display: grid; grid-template-columns: 40px 40px 40px 20px; grid-template-rows: repeat(3, 26px); padding: 0 1px; }
.tools button { gap: 6px; justify-content: flex-start; }
.list { width: 194px; display: grid; grid-template-rows: repeat(3, 26px); padding: 0 4px 0 1px; }
.list button { gap: 6px; justify-content: flex-start; }
.list .caret { margin-left: auto; }

/* command tabs and view toolbar */
.work { flex: 1; min-height: 0; display: flex; flex-direction: column; background: #c4c8d4; }
.toprow { flex: none; height: 28px; display: flex; }
.tabs { display: flex; flex: none; font-size: 14px; background: #d4d4d4; }
.tabs button { padding: 0 10px; border-right: 1px solid #7d7d7d; border-bottom: 1px solid #7d7d7d; color: #222; white-space: nowrap; }
.tabs button:first-child { padding: 0 9px; }
.tabs button:nth-child(n+5) { padding: 0 14px; }
.tabs .on { background: #f7f7f7; border-bottom-color: #f7f7f7; font-weight: bold; font-size: 13px; }
.hud { display: flex; align-items: center; margin: 2px auto 0 16%; gap: 6px; }
.hud .wide { gap: 6px; padding-right: 2px; }
.hud .caret { border-top-color: #8f929a; }
.docctl { display: flex; align-items: center; gap: 12px; padding: 2px 11px 0 0; }

/* feature tree panel */
.body { flex: 1; min-height: 0; display: flex; position: relative; }
.side { width: 296px; flex: none; display: flex; flex-direction: column; background: #f7f7f7; border-right: 1px solid #8a8a8a; overflow: hidden; }
.grip { height: 16px; margin: 2px 4px 4px 0; border: 1px solid #c9c9c9; border-width: 1px 0; display: flex; align-items: center; justify-content: center; flex: none; }
.grip i { width: 6px; height: 6px; border-radius: 50%; border: 1px solid #888; background: #ccc; }
.ptabs { display: flex; flex: none; height: 26px; }
.ptabs button { width: 40px; border: 1px solid #8f8f8f; border-left: 0; background: #d4d4d4; }
.ptabs .on { background: #f7f7f7; border-bottom: 0; }
.treewrap { flex: 1; min-height: 0; display: flex; background: #efefef; }
.treebox { flex: 1; background: #f7f7f7; overflow: hidden; }
.filter { height: 31px; margin: 0 3px 2px; border: 1px solid #c4c4c4; padding: 6px 2px; }
.tree { list-style: none; font-size: 14px; color: #222; }
.tree li { height: 28px; display: flex; align-items: center; gap: 6px; padding-left: 24px; white-space: nowrap; }
.tree .root { padding-left: 3px; gap: 4px; }
.tree .x { padding-left: 8px; }
.tree .x::before { content: ""; margin-right: 6px; border: 4px solid transparent; border-left-color: #555; border-right: 0; }
.tree .off { color: #8b8b8b; }
.vscroll { width: 19px; display: flex; justify-content: center; align-items: flex-start; }
.vscroll i { width: 3px; height: 88%; background: #858585; }
.hscroll { height: 21px; flex: none; background: #efefef; display: flex; align-items: center; padding-left: 20px; }
.hscroll i { width: 155px; height: 3px; border-radius: 2px; background: #858585; }

/* graphics area */
.view { flex: 1; min-width: 0; position: relative; }
.model { width: 100%; height: 100%; overflow: visible; pointer-events: none; }
.dim { font: italic bold 13px "Liberation Sans", Arial, sans-serif; text-anchor: middle; }
.count { font: bold 15px "Liberation Sans", Arial, sans-serif; }
.axis { font: 13px "Liberation Sans", Arial, sans-serif; text-anchor: middle; }
.triad { position: absolute; left: 34px; bottom: 18px; width: 64px; height: 72px; overflow: visible; }
.confirm { position: absolute; right: 38px; top: 7px; width: 70px; display: flex; flex-direction: column; gap: 5px; }
.confirm svg:last-child { align-self: flex-end; }
.taskpane { position: absolute; right: 0; top: 21px; width: 32px; border: 1px solid #7d7d7d; border-right: 0; background: #d4d4d4; }
.taskpane button { width: 31px; height: 30px; border-bottom: 1px solid #7d7d7d; }
.taskpane button:last-child { border-bottom: 0; }
.taskpane .on { background: #f7f7f7; }

/* property manager */
.pm { position: absolute; left: 53px; top: 29px; width: 286px; height: 490px; padding: 2px; border: 1px solid #858585; background: #f7f7f7; font-size: 12px; line-height: 16px; }
.pmhead { height: 32px; display: flex; align-items: center; gap: 5px; margin-right: 1px; padding-top: 2px; background: #abacb1; border-bottom: 2px solid #111; }
.pmhead h2 { flex: 1; text-align: center; font-size: 14px; color: #111; padding-left: 9px; }
.pmtitle { display: flex; align-items: center; gap: 9px; padding: 11px 16px 0 13px; }
.pmtitle h3 { flex: 1; font-size: 14px; line-height: 18px; }
.pmact { display: flex; align-items: center; height: 47px; padding-left: 11px; gap: 18px; }
.grp { margin: 0 7px 0 5px; border-top: 1px solid #a9a9a9; padding: 8px 12px 11px 4px; height: 67px; }
.grp.dir { height: 231px; display: flex; flex-direction: column; }
.grp.fold { height: 36px; }
.grp h4 { display: flex; align-items: center; justify-content: space-between; line-height: 16px; color: #444; margin: 0 -12px 7px 0; padding-right: 2px; }
.grp.dir h4 { flex: none; }
.row { display: grid; grid-template-columns: 30px 1fr; column-gap: 5px; align-items: center; justify-items: center; }
.row > :last-child { width: 100%; }
.grp.dir .row { margin-bottom: 9px; }
.grp.dir .pick { margin: 0 0 11px; align-items: start; }
.grp.dir h4 + .row { margin-bottom: 6px; }
.grp.dir .row.chk { margin: 4px 0 0; }
.pick svg { margin-top: 6px; }
.box { width: 30px; height: 30px; border: 1px solid #999; background: #fcfcfc; }
.sel { display: grid; height: 25px; }
.sel > * { grid-area: 1 / 1; }
.sel select { appearance: none; border: 1px solid #c2c2c2; border-radius: 2px; background: #fdfdfd; color: #111; font: inherit; padding: 0 3px; }
.sel svg { align-self: center; justify-self: end; margin-right: 5px; pointer-events: none; width: 10px; height: 10px; }
.picker { display: flex; height: 47px; gap: 1px; }
.picker i { width: 15px; background: #55a8ff; }
.picker textarea { flex: 1; min-width: 0; resize: none; border: 1px solid #8189a0; background: #fff; }
.spin { height: 26px; display: flex; border: 1px solid #a4a7b0; background: #fff; }
.spin input { flex: 1; min-width: 0; border: 0; padding: 0 2px; font: 13px/18px "Open Sans", sans-serif; background: none; color: #000; }
.spin.off { background: #efefef; }
.spin div { width: 22px; background: #f2f2f2; padding: 1px; display: flex; flex-direction: column; gap: 1px; }
.spin button { flex: 1; border: 1px solid #cfcfcf; background: #fff; }
.spin .caret:not(.up) { border-top-color: #222; }
.row.chk { justify-items: start; }
label { display: flex; align-items: center; gap: 4px; color: #777; }
input[type=checkbox] { appearance: none; width: 15px; height: 15px; margin: 0; border: 1px solid #c4c4c4; border-radius: 3px; background: #fbfbfb; }
h4 label { gap: 8px; color: inherit; }
h4 input[type=checkbox] { border-color: #555; }

/* sheets and status */
.sheets { flex: none; height: 21px; display: flex; border-top: 1px solid #7d7d7d; border-bottom: 1px solid #7d7d7d; padding-left: 2px; font-size: 14px; }
.nav { width: 20px; background: #a9a9c2; border: 1px solid #8c8ca3; }
.sheet { padding: 0 14px; background: #d4d4d4; border-right: 1px solid #7d7d7d; }
.sheet.on { background: #f7f7f7; font-weight: bold; padding: 0 14px 0 18px; color: #000; }
.sheet.wide { padding: 0 30px 0 14px; }
.status { flex: none; height: 19px; display: flex; padding: 3px 2px 0 1px; font-size: 14px; line-height: 20px; color: #000; white-space: nowrap; overflow: hidden; }
.status .app { margin-right: auto; }
.status span { flex: none; }
.c1 { width: 76px; }
.c2 { width: 65px; }
.c3 { width: 42px; }
.c4 { width: 103px; font-size: 13px; border-right: 1px solid #ccc; }
.c5 { margin-left: 8px; padding-left: 4px; width: 113px; font-size: 13px; border: 1px solid #ccc; border-width: 0 1px; }
.c6 { margin-left: 15px; padding-left: 52px; width: 108px; color: #a5a5a5; border-left: 1px solid #ccc; }
.status .caret { margin: 6px 65px 0 0; }
```
